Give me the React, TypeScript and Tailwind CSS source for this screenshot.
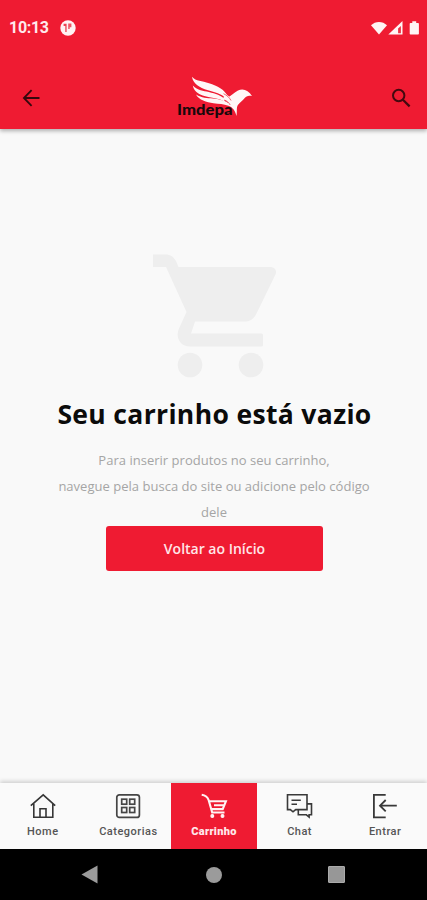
import React from "react";

function StatusBar() {
  return (
    <div className="flex h-[56px] items-center justify-between pl-[9px] pr-[7px] font-['Roboto',sans-serif] text-white">
      <div className="flex items-center gap-3">
        <span className="w-[39px] whitespace-nowrap text-[16px] font-bold leading-5 tracking-[-0.3px] text-[#ffe9ec]">10:13</span>
        <svg width="16" height="16" viewBox="0 0 16 16">
          <circle cx="8" cy="8" r="7.700" fill="#fff2f3" />
          <path d="M3.600 3.800h3v8.200H5.300V6H3.600z" fill="#ec4051" />
          <path d="M8.200 3.500h3.200v3.800H9.700v1.600H8.200z" fill="#ee5363" />
        </svg>
      </div>
      <svg width="50" height="18" viewBox="0 0 50 18" fill="#fff5f5">
        <path d="M1 6.300C5.200 1.800 12.800 1.800 17 6.300L9 15.600z" />
        <path d="M32.500 2v13.500H18.300z" />
        <path d="M30.900 7v7.200h-2.800V9.600z" fill="#ee3045" />
        <path d="M40.500 4h1.800V2.300h3.900V4h1.900c.5 0 .8.3.8.8v10c0 .5-.3.8-.8.800h-7.600c-.5 0-.8-.3-.8-.8v-10c0-.5.3-.8.8-.8z" />
      </svg>
    </div>
  );
}

function Logo() {
  return (
    <svg width="80" height="46" viewBox="0 0 80 46" aria-label="Imdepa">
      <g fill="#fff7f7">
        <path d="M16 1.800C20 6.500 26 5.800 33 8.300 41.500 11.200 48.500 14.500 51.500 21L50 23.500C45 18.500 39 17.500 32 15.300 23 12.500 17 8.500 16 1.800z" />
        <path d="M16.800 10.500c5 5 10.500 5.200 16 6.600 7 1.700 12 3.200 16.500 7.400l-1.500 1.800c-5-3-10-3.300-15.500-4.300C24.500 20.300 18 17.300 16.800 10.500z" />
        <path d="M20 19.500c6 3.700 11 3.400 17 4 6 .6 10.500 1.700 15 4.300l1-5.800c2.500-1.500 5-4.400 9-6.400 5-2.500 10.500-.4 14 5.400-3.500-.8-5.800-.1-7.500 2.300-2 2.700-4.500 4.200-6.200 6.200-2.300 2.900-.9 6.500-1.800 11.500-1.300-5-3.500-8.500-8-10.200-5-2-9.500-1.800-15-2.600-7-1-14.500-3-17.500-8.700z" />
        <path d="M49 18.500 54 22l-1 6-6-4z" />
      </g>
      <path d="M47.500 18.700c3.300 1.500 5.800 3.600 7.500 6.800M48.500 25c2.500 1 4.500 2.700 5.700 5" fill="none" stroke="#f03c4f" strokeWidth=".8" />
      <text x="1" y="40" textLength="55.500" lengthAdjust="spacingAndGlyphs" fill="#19080b" fontFamily="Lato, sans-serif" fontWeight="900" fontSize="15.500">Imdepa</text>
    </svg>
  );
}

function Header() {
  return (
    <header className="relative h-[129px] shrink-0 bg-[#ef1b32] shadow-[0_2px_4px_rgba(0,0,0,0.3)]">
      <StatusBar />
      <div className="flex items-start justify-between pl-[22px] pr-[16px]">
        <button aria-label="Voltar" className="mt-[33px]">
          <svg width="18" height="18" viewBox="0 0 18 18" fill="none" stroke="#35080d" strokeWidth="1.800">
            <path d="M17.500 9H2M9.600 1.200 1.900 9l7.700 7.800" />
          </svg>
        </button>
        <div className="mt-[19px]"><Logo /></div>
        <button aria-label="Buscar" className="mt-[32px]">
          <svg width="20" height="20" viewBox="0 0 20 20" fill="none" stroke="#43090f">
            <circle cx="7.700" cy="7.500" r="5.700" strokeWidth="2" />
            <path d="m11.900 11.700 6.700 6.700" strokeWidth="2.200" />
          </svg>
        </button>
      </div>
    </header>
  );
}

function EmptyCart() {
  return (
    <main className="flex flex-1 flex-col items-center pl-[2px] pt-[125px] font-['Open_Sans',sans-serif]">
      <svg width="124" height="124" viewBox="0 0 124 124" fill="#eeeeee">
        <path d="M0 0.500h13C20 0.500 23 6 25.500 13H117c5 0 7.500 4 5.200 8L104 58.500c-3 6-6 9-13 9H42L38 79.500h70.500q1.500 0 1.500 1.500v10q0 1.500-1.500 1.500H37C27 92.500 22 83 26 74.500L33.500 58 13 13H0z" />
        <circle cx="37" cy="111" r="12.300" />
        <circle cx="98" cy="111" r="12.300" />
      </svg>
      <h1 className="mt-[17px] whitespace-nowrap text-[26.500px] font-bold leading-[38px] tracking-[0.350px] text-[#0b0b0b]">Seu carrinho está vazio</h1>
      <p className="mt-[14px] whitespace-nowrap pr-px text-center text-[13px] leading-[26px] tracking-[0.020px] text-[#a5a5a5]">
        Para inserir produtos no seu carrinho,<br />
        navegue pela busca do site ou adicione pelo código<br />
        dele
      </p>
      <button className="mt-px h-[45px] w-[217px] rounded-[3px] bg-[#ef1b32] pb-px text-[14px] font-semibold text-[#ffe6e9]">Voltar ao Início</button>
    </main>
  );
}

function HomeIcon() {
  return (
    <svg width="28" height="26" viewBox="0 0 28 26" fill="none" stroke="#363636" strokeWidth="1.600">
      <path d="M1.800 12.700 14.200 1.800l12 10.900M4.800 10.800v13.400h19V10.800M11 24v-8.200h6V24" />
    </svg>
  );
}

function CategoriesIcon() {
  return (
    <svg width="28" height="26" viewBox="0 0 28 26" fill="none" stroke="#454545" strokeWidth="1.700">
      <rect x="2.800" y="1.800" width="22.600" height="22.600" rx="2.500" />
      <rect x="7.700" y="6.200" width="5" height="5" />
      <rect x="15.700" y="6.200" width="5" height="5" />
      <rect x="7.700" y="14.500" width="5" height="5" />
      <rect x="15.700" y="14.500" width="5" height="5" />
    </svg>
  );
}

function CartIcon() {
  return (
    <svg width="28" height="26" viewBox="0 0 28 26" fill="none" stroke="#fff4f4" strokeWidth="2.100">
      <path d="M1.700 1.700c4 .6 5.800 2 6.900 5.300l3.600 12.500h12.300M9.200 8.300h16.700l-3.200 7.800H11.800M14 12.200h10" />
      <circle cx="12.300" cy="23" r="1.400" fill="#fff4f4" strokeWidth="1.200" />
      <circle cx="22.500" cy="23" r="1.400" fill="#fff4f4" strokeWidth="1.200" />
    </svg>
  );
}

function ChatIcon() {
  return (
    <svg width="28" height="26" viewBox="0 0 28 26" fill="none" stroke="#393939" strokeWidth="1.600">
      <path d="M1.500 1.800H21v14.800H9.700l-2.700 2.200-2.700-2.200H1.500zM21 10.900h4.500v10.900h-2.400v2.200l-2.700-2.200h-8.100v-4.400M5.500 7.200h9.300M5.500 11.200H11" />
    </svg>
  );
}

function LoginIcon() {
  return (
    <svg width="28" height="26" viewBox="0 0 28 26" fill="none" stroke="#383838" strokeWidth="1.800">
      <path d="M14.700 1.800H2.900v22.500h11.800M25.800 12.700H9.500M14.700 7l-5.700 5.700 5.700 5.700" />
    </svg>
  );
}

const items = [
  { label: "Home", icon: HomeIcon, active: false },
  { label: "Categorias", icon: CategoriesIcon, active: false },
  { label: "Carrinho", icon: CartIcon, active: true },
  { label: "Chat", icon: ChatIcon, active: false },
  { label: "Entrar", icon: LoginIcon, active: false },
];

function BottomNav() {
  return (
    <nav className="grid h-[66px] shrink-0 grid-cols-[repeat(5,85.600px)] bg-[#fafafa] font-['Roboto',sans-serif] shadow-[0_-2px_4px_rgba(0,0,0,0.16)]">
      {items.map(({ label, icon: Icon, active }) => (
        <button
          key={label}
          className={`flex flex-col items-center pt-[10px] text-[11px] leading-[14px] ${active ? "bg-[#ef1b32] font-black text-[#ffe8ea]" : "font-medium text-[#555555]"}`}
        >
          <Icon />
          <span className={active ? "mt-[6px] tracking-[0.300px]" : "mt-[6px] tracking-[0.500px]"}>{label}</span>
        </button>
      ))}
    </nav>
  );
}

function SystemNav() {
  return (
    <div className="flex h-[51px] shrink-0 items-center justify-between bg-black pl-[81px] pr-[82px]">
      <svg width="17" height="19" viewBox="0 0 17 19"><path d="M16.500.5v18L.500 9.500z" fill="#9b9b9b" /></svg>
      <div className="ml-px size-4 rounded-full bg-[#9b9b9b]" />
      <div className="size-[17px] rounded-[1px] border border-[#aaa] bg-[#979797]" />
    </div>
  );
}

export default function App() {
  return (
    <div className="flex h-[900px] w-[427px] flex-col overflow-hidden bg-[#f9f9f9]">
      <Header />
      <EmptyCart />
      <BottomNav />
      <SystemNav />
    </div>
  );
}
